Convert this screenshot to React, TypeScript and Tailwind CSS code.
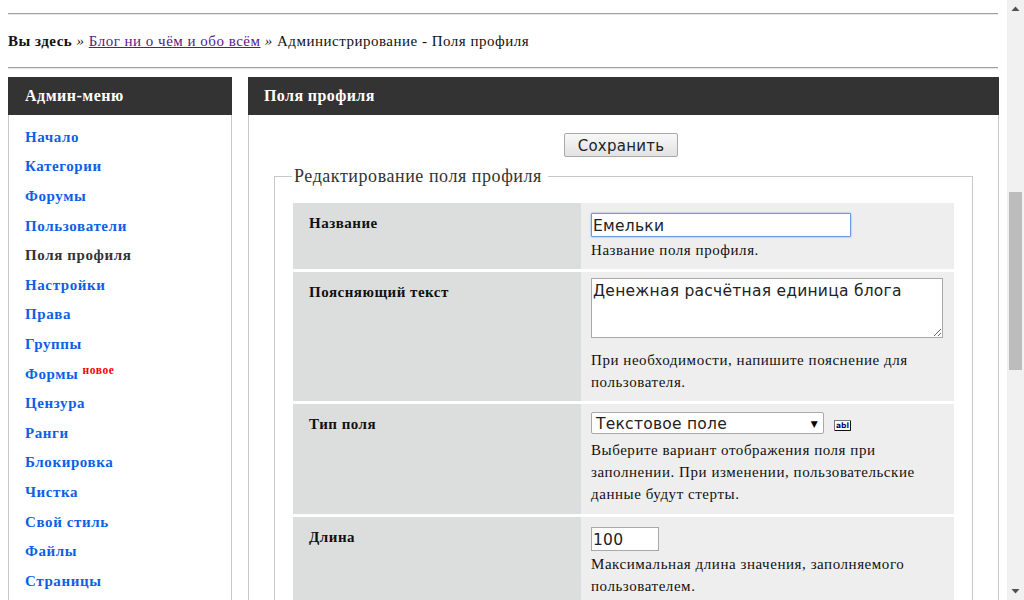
const menu = [
  "Начало",
  "Категории",
  "Форумы",
  "Пользователи",
  "Поля профиля",
  "Настройки",
  "Права",
  "Группы",
  "Формы",
  "Цензура",
  "Ранги",
  "Блокировка",
  "Чистка",
  "Свой стиль",
  "Файлы",
  "Страницы",
];

function MenuItem({ title }: { title: string }) {
  if (title === "Поля профиля") {
    return <div className="h-[29.6px] leading-[29.6px] font-bold text-[#333]">{title}</div>;
  }
  return (
    <div className="h-[29.6px] leading-[29.6px] font-bold text-[#0d5fe6]">
      {title}
      {title === "Формы" && (
        <span className="relative top-[-5px] ml-[4px] text-[11.5px] leading-none font-bold text-[#f00]">новое</span>
      )}
    </div>
  );
}

function Row({ label, top, height, children }: { label: string; top: string; height: string; children: React.ReactNode }) {
  return (
    <div className={`flex mb-[3px] ${height}`}>
      <div className={`w-[288px] shrink-0 bg-[#dcdedd] pl-[16px] font-bold text-[#111] tracking-[0.5px] text-[15px] ${top}`}>{label}</div>
      <div className="flex-1 bg-[#eeeeee] pl-[10px] pr-[11px] tracking-[0.55px]">{children}</div>
    </div>
  );
}

const inputFont = "font-['DejaVu_Sans',sans-serif] tracking-[0.25px] text-[#222] outline-none";

export default function App() {
  return (
    <div className="flex h-[600px] overflow-hidden bg-white font-['Liberation_Serif',serif] text-[15px] tracking-[0.4px] text-[#111]">
      <div className="w-[1007px] shrink-0 pl-[8px] pr-[9px] pt-[13px]">
        <div className="h-[2px] border-t border-[#a0a0a0] bg-[#e8e8e8]" />
        <div className="h-[52px] leading-[52px] text-[15px] tracking-[0.5px]">
          <b>Вы здесь</b> <i>»</i> <a className="text-[#551a8b] underline">Блог ни о чём и обо всём</a> <i>»</i> Администрирование - Поля профиля
        </div>
        <div className="h-[2px] border-t border-[#a0a0a0] bg-[#e8e8e8]" />

        <div className="flex gap-[16px] mt-[8px]">
          <div className="w-[224px] shrink-0">
            <div className="h-[38px] bg-[#333] pl-[17px] leading-[38px] text-[16px] font-bold tracking-[0.5px] text-white">Админ-меню</div>
            <div className="h-[500px] border-x border-[#c8c8c8] pl-[16px] pt-[7.8px] tracking-[0.6px]">
              {menu.map((m) => (
                <MenuItem key={m} title={m} />
              ))}
            </div>
          </div>

          <div className="flex-1">
            <div className="h-[38px] bg-[#333] pl-[16px] leading-[38px] text-[16px] font-bold text-white">Поля профиля</div>
            <div className="h-[500px] border-x border-[#c8c8c8] px-[25px]">
              <div className="flex justify-center pt-[18px] pr-[5px]">
                <button className={`h-[24px] w-[114px] rounded-[2px] border border-[#a9a9a9] bg-gradient-to-b from-[#f8f8f8] to-[#e2e2e2] pt-[2px] text-[15px] leading-none ${inputFont}`}>
                  Сохранить
                </button>
              </div>
              <fieldset className="mt-[9px] border border-[#c8c8c8] pl-[18px] pr-[18px]">
                <legend className="ml-[-1px] px-[2px] pr-[6px] text-[18px] tracking-[0.55px] leading-[20px] text-[#333]">Редактирование поля профиля</legend>
                <div className="mt-[17px]">
                  <Row label="Название" top="pt-[9px]" height="h-[66px]">
                    <input
                      readOnly
                      value="Емельки"
                      className={`mt-[10px] block h-[24px] w-[260px] rounded-[1px] border border-[#6d96e6] bg-white pl-[1px] pt-[1px] text-[15.5px] shadow-[0_0_2px_#7fa5ee] ${inputFont}`}
                    />
                    <div className="mt-[2px] leading-[22px]">Название поля профиля.</div>
                  </Row>
                  <Row label="Поясняющий текст" top="pt-[9px]" height="h-[129px]">
                    <textarea
                      readOnly
                      value="Денежная расчётная единица блога"
                      className={`mt-[6px] block h-[60px] w-[352px] border border-[#a9a9a9] bg-white pl-[1px] pt-[3px] text-[15.5px] leading-[18px] ${inputFont}`}
                    />
                    <div className="mt-[11px] leading-[22px]">
                      При необходимости, напишите пояснение для
                      <br />
                      пользователя.
                    </div>
                  </Row>
                  <Row label="Тип поля" top="pt-[9px]" height="h-[110px]">
                    <div className="flex items-center pt-[8px]">
                      <div className={`relative h-[22px] w-[233px] rounded-[2px] border border-[#a9a9a9] bg-white pl-[4px] text-[15.5px] leading-[22px] ${inputFont}`}>
                        Текстовое поле
                        <span className="absolute right-[5px] top-[0px] text-[9px] text-black">▼</span>
                      </div>
                      <svg className="ml-[10px] mt-[4px]" width="17" height="11" viewBox="0 0 17 11">
                        <rect x="0.5" y="0.5" width="16" height="10" fill="#fff" stroke="#777" />
                        <path d="M1 10.5H16.5V1" stroke="#111" fill="none" />
                        <text x="2" y="8" fontSize="7.5" fontWeight="700" fill="#00007f" fontFamily="DejaVu Sans, sans-serif" letterSpacing="0">abl</text>
                      </svg>
                    </div>
                    <div className="mt-[5px] leading-[22px]">
                      Выберите вариант отображения поля при
                      <br />
                      заполнении. При изменении, пользовательские
                      <br />
                      данные будут стерты.
                    </div>
                  </Row>
                  <Row label="Длина" top="pt-[9px]" height="h-[110px]">
                    <input
                      readOnly
                      value="100"
                      className={`mt-[10px] block h-[24px] w-[68px] border border-[#a9a9a9] bg-white pl-[1px] pt-[1px] text-[15.5px] ${inputFont}`}
                    />
                    <div className="mt-[2px] leading-[22px]">
                      Максимальная длина значения, заполняемого
                      <br />
                      пользователем.
                    </div>
                  </Row>
                </div>
              </fieldset>
            </div>
          </div>
        </div>
      </div>

      <div className="w-[17px] shrink-0 bg-[#f1f1f1] relative">
        <div className="mx-[2px] mt-[192px] h-[178px] bg-[#bcbcbc]" />
        <svg className="absolute left-[4px] top-[6px]" width="9" height="6" viewBox="0 0 9 6"><path d="M4.5 0.5L8.5 5H0.5z" fill="#505050" /></svg>
        <svg className="absolute left-[4px] bottom-[6px]" width="9" height="6" viewBox="0 0 9 6"><path d="M0.5 1H8.5L4.5 5.5z" fill="#505050" /></svg>
      </div>
    </div>
  );
}
